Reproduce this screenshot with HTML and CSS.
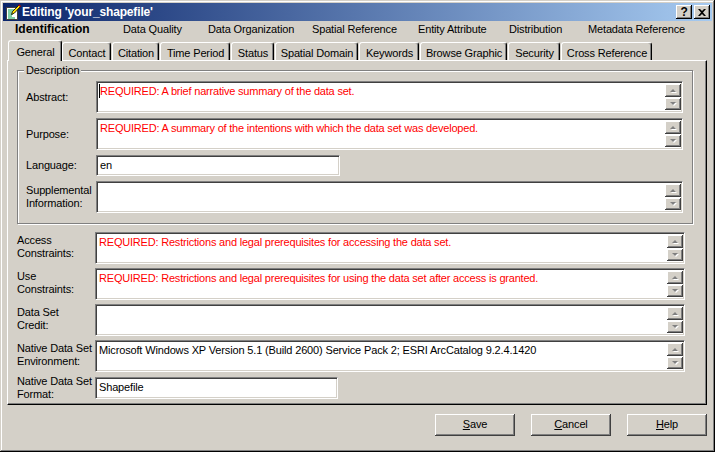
FILE: index.html
```html
<!DOCTYPE html>
<html lang="en">
<head>
<meta charset="utf-8">
<title>Editing 'your_shapefile'</title>
<link rel="stylesheet" href="styles.css">
</head>
<body>
<div class="window">
  <header class="titlebar">
    <svg class="app-icon" width="16" height="16" viewBox="0 0 16 16">
      <rect x="1.500" y="3.500" width="11" height="12" fill="#fff" stroke="#404040"/>
      <path d="M3 6h7M3 8h6M3 10h5M3 12h4M3 14h7" stroke="#00a050" stroke-width="1"/>
      <path d="M14 1l1.500 1.500-6 6.500-3 1.500 1-3z" fill="#ffe000" stroke="#000" stroke-width="0.8"/>
      <path d="M13.300 1.500l1 .7 1 1 .5-1.500-1.500-1.500z" fill="#c00000"/>
    </svg>
    <span class="title-text">Editing 'your_shapefile'</span>
    <span class="title-btn help-btn">?</span>
    <span class="title-btn close-btn">
      <svg width="8" height="7" viewBox="0 0 8 7"><path d="M0 0h2l2 2 2-2h2L5 3.500 8 7H6L4 5 2 7H0l3-3.500z" fill="#000"/></svg>
    </span>
  </header>

  <nav class="sections">
    <span class="section active">Identification</span>
    <span class="section">Data Quality</span>
    <span class="section">Data Organization</span>
    <span class="section">Spatial Reference</span>
    <span class="section">Entity Attribute</span>
    <span class="section">Distribution</span>
    <span class="section">Metadata Reference</span>
  </nav>

  <div class="tabs">
    <span class="tab selected">General</span>
    <span class="tab">Contact</span>
    <span class="tab">Citation</span>
    <span class="tab">Time Period</span>
    <span class="tab">Status</span>
    <span class="tab">Spatial Domain</span>
    <span class="tab">Keywords</span>
    <span class="tab">Browse Graphic</span>
    <span class="tab">Security</span>
    <span class="tab">Cross Reference</span>
  </div>

  <main class="panel">
    <fieldset class="group">
      <legend class="legend">Description</legend>
      <div class="row">
        <label class="label">Abstract:</label>
        <div class="box"><div class="text req caret">REQUIRED: A brief narrative summary of the data set.</div><div class="scroll"><span class="sb up"></span><span class="sb down"></span></div></div>
      </div>
      <div class="row">
        <label class="label">Purpose:</label>
        <div class="box"><div class="text req">REQUIRED: A summary of the intentions with which the data set was developed.</div><div class="scroll"><span class="sb up"></span><span class="sb down"></span></div></div>
      </div>
      <div class="row">
        <label class="label">Language:</label>
        <div class="box single lang"><div class="text">en</div></div>
      </div>
      <div class="row">
        <label class="label">Supplemental<br>Information:</label>
        <div class="box"><div class="text"></div><div class="scroll"><span class="sb up"></span><span class="sb down"></span></div></div>
      </div>
    </fieldset>

    <div class="outer-rows">
      <div class="row wide">
        <label class="label">Access<br>Constraints:</label>
        <div class="box"><div class="text req">REQUIRED: Restrictions and legal prerequisites for accessing the data set.</div><div class="scroll"><span class="sb up"></span><span class="sb down"></span></div></div>
      </div>
      <div class="row wide">
        <label class="label">Use<br>Constraints:</label>
        <div class="box"><div class="text req">REQUIRED: Restrictions and legal prerequisites for using the data set after access is granted.</div><div class="scroll"><span class="sb up"></span><span class="sb down"></span></div></div>
      </div>
      <div class="row wide">
        <label class="label">Data Set<br>Credit:</label>
        <div class="box"><div class="text"></div><div class="scroll"><span class="sb up"></span><span class="sb down"></span></div></div>
      </div>
      <div class="row wide">
        <label class="label">Native Data Set<br>Environment:</label>
        <div class="box"><div class="text">Microsoft Windows XP Version 5.1 (Build 2600) Service Pack 2; ESRI ArcCatalog 9.2.4.1420</div><div class="scroll"><span class="sb up"></span><span class="sb down"></span></div></div>
      </div>
      <div class="row wide row-format">
        <label class="label">Native Data Set<br>Format:</label>
        <div class="box single format"><div class="text">Shapefile</div></div>
      </div>
    </div>
  </main>

  <footer class="actions">
    <button class="btn"><u>S</u>ave</button>
    <button class="btn"><u>C</u>ancel</button>
    <button class="btn"><u>H</u>elp</button>
  </footer>
</div>
</body>
</html>
```

FILE: styles.css
```css
* { box-sizing: border-box; }
html, body { margin: 0; padding: 0; }
body {
  width: 715px;
  height: 452px;
  overflow: hidden;
  background: #d4d0c8;
  font: 11px/13px "Liberation Sans", Arial, sans-serif;
  letter-spacing: -0.15px;
  color: #000;
}
.window {
  width: 715px;
  height: 452px;
  padding: 3px;
  display: flex;
  flex-direction: column;
  background: #d4d0c8;
  box-shadow: inset -1px -1px 0 #000, inset 1px 1px 0 #d4d0c8, inset -2px -2px 0 #808080, inset 2px 2px 0 #fff;
}
.titlebar {
  height: 18px;
  flex: none;
  display: flex;
  align-items: center;
  padding: 0 2px;
  background: linear-gradient(90deg, #0a246a, #a6caf0);
  color: #fff;
}
.app-icon { flex: none; margin-right: 1px; }
.title-text { flex: 1; font-weight: 700; font-size: 12px; letter-spacing: -0.15px; }
.title-btn {
  width: 16px;
  height: 14px;
  flex: none;
  display: flex;
  align-items: center;
  justify-content: center;
  background: #d4d0c8;
  color: #000;
  font-weight: 700;
  font-size: 12px;
  box-shadow: inset -1px -1px 0 #000, inset 1px 1px 0 #fff, inset -2px -2px 0 #808080;
}
.help-btn { margin-right: 2px; }
.sections {
  height: 19px;
  flex: none;
  display: grid;
  grid-template-columns: 108px 85px 104px 106px 91px 79px auto;
  align-items: center;
  padding: 0 0 2px 12px;
}
.section.active { font-weight: 700; font-size: 12px; letter-spacing: 0; }
.tabs {
  height: 20px;
  flex: none;
  display: grid;
  grid-template-columns: 54px 50px 48px 71px 44px 84px 61px 88px 53px 92px;
  justify-content: start;
  align-items: end;
  padding-left: 5px;
  position: relative;
  z-index: 1;
}
.tab {
  height: 18px;
  padding: 3px 0 0 1px;
  display: flex;
  align-items: center;
  justify-content: center;
  border-top: 1px solid #fff;
  border-left: 1px solid #fff;
  border-right: 1px solid #000;
  border-radius: 3px 3px 0 0;
  box-shadow: inset -1px 0 0 #808080;
  margin-right: 1px;
  background: #d4d0c8;
}
.tab.selected {
  height: 21px;
  padding-top: 2px;
  margin-bottom: -1px;
  margin-right: 0;
}
.panel {
  width: 700px;
  height: 345px;
  margin-left: 4px;
  flex: none;
  padding: 3px 9px 0;
  border-top: 1px solid #fff;
  border-left: 1px solid #fff;
  border-right: 1px solid #000;
  border-bottom: 1px solid #000;
  box-shadow: inset -1px -1px 0 #808080;
}
.group {
  margin: 0;
  padding: 4px 8px 0;
  width: 676px;
  height: 160px;
  border: 1px solid #808080;
  box-shadow: inset 1px 1px 0 #fff, 1px 1px 0 #fff;
  display: flex;
  flex-direction: column;
  gap: 5px;
}
.legend {
  padding: 0 2px;
  margin-left: -2px;
  background: #d4d0c8;
  line-height: 13px;
}
.row { display: flex; align-items: center; }
.label { width: 70px; flex: none; }
.box {
  width: 587px;
  height: 32px;
  flex: none;
  display: flex;
  background: #fff;
  border: 1px solid;
  border-color: #808080 #fff #fff #808080;
  box-shadow: inset 1px 1px 0 #404040, inset -1px -1px 0 #d4d0c8;
  padding: 2px 2px 2px 3px;
}
.text { flex: 1; min-width: 0; white-space: nowrap; padding-top: 1px; }
.req { color: #f00; letter-spacing: -0.2px; }
.caret { border-left: 1px solid #000; margin-left: -1px; height: 14px; }
.box.single { height: 21px; }
.lang { width: 244px; }
.scroll { width: 16px; flex: none; display: flex; flex-direction: column; gap: 1px; margin-right: -1px; }
.sb {
  flex: 1;
  display: flex;
  align-items: center;
  justify-content: center;
  background: #d4d0c8;
  box-shadow: inset -1px -1px 0 #404040, inset 1px 1px 0 #fff, inset -2px -2px 0 #808080;
}
.sb::after {
  content: "";
  width: 0;
  height: 0;
  border-left: 3px solid transparent;
  border-right: 3px solid transparent;
  filter: drop-shadow(1px 1px 0 #fff);
}
.up::after { border-bottom: 3px solid #808080; }
.down::after { border-top: 3px solid #808080; }
.outer-rows {
  display: flex;
  flex-direction: column;
  gap: 4px;
  margin-top: 8px;
}
.wide .label { width: 78px; padding-bottom: 4px; margin-bottom: -2px; }
.wide .box { width: 590px; }
.wide .box.single { height: 22px; width: 243px; }
.row-format { margin-top: 1px; }
.row-format .label { padding-bottom: 0; margin: -4px 0 -3px; }
.actions {
  flex: 1;
  display: flex;
  justify-content: flex-end;
  gap: 16px;
  padding: 9px 5px 0 0;
}
.btn {
  width: 80px;
  height: 22px;
  padding: 0 0 1px;
  font: inherit;
  letter-spacing: inherit;
  color: #000;
  background: #d4d0c8;
  border: 0;
  box-shadow: inset -1px -1px 0 #404040, inset 1px 1px 0 #fff, inset -2px -2px 0 #808080;
}
```
